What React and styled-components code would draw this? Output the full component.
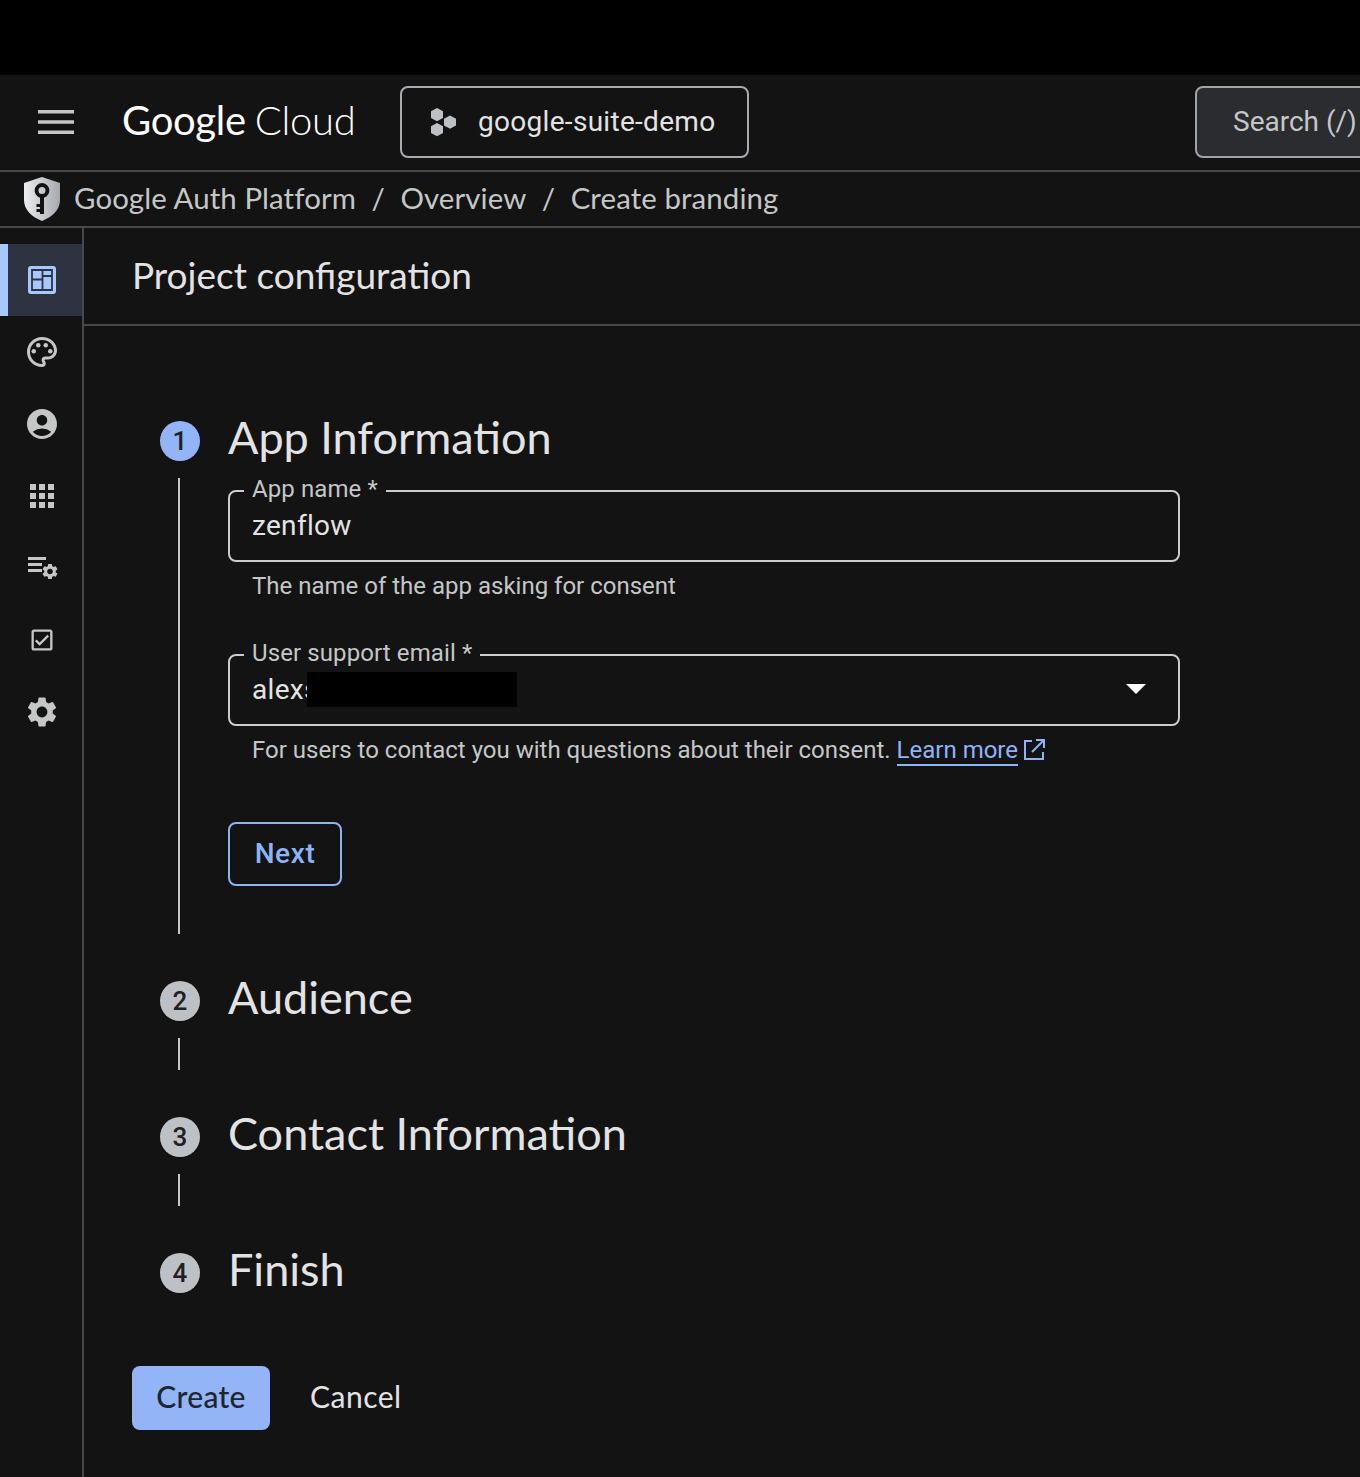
import React from 'react';
import styled, { createGlobalStyle } from 'styled-components';
import { MdOutlinePalette, MdAccountCircle, MdApps, MdSettings, MdOutlineCheckBox, MdArrowDropDown } from 'react-icons/md';

const GlobalStyle = createGlobalStyle`
  html, body { margin: 0; padding: 0; background: #131314; }
  body { font-family: Roboto, "Liberation Sans", sans-serif; color: #e3e3e3; }
  * { box-sizing: border-box; }
`;

const DISPLAY = 'Lato, "Open Sans", sans-serif';

const Page = styled.div`
  width: 1360px;
  height: 1477px;
  overflow: hidden;
  display: flex;
  flex-direction: column;
  background: #131314;
`;

const BlackStrip = styled.div`
  height: 75px;
  background: #000;
  flex: none;
`;

const TopBar = styled.header`
  height: 97px;
  flex: none;
  display: flex;
  align-items: center;
  padding: 0 0 2px 38px;
  border-bottom: 2px solid #47484a;
  white-space: nowrap;
`;

const Burger = styled.svg`
  width: 36px;
  height: 24px;
  flex: none;
`;

const Logo = styled.div`
  margin-left: 48px;
  padding-bottom: 4px;
  width: 278px;
  flex: none;
  font-family: ${DISPLAY};
  font-size: 40px;
  letter-spacing: -0.3px;
  color: #fff;
  display: flex;
  gap: 9px;
`;

const LogoLight = styled.span`
  font-weight: 300;
`;

const ProjectButton = styled.div`
  width: 349px;
  height: 72px;
  flex: none;
  display: flex;
  align-items: center;
  gap: 20px;
  padding-left: 28px;
  border: 2px solid #a8abb0;
  border-radius: 8px;
  font-size: 28px;
  letter-spacing: 0.3px;
  color: #e3e3e3;
`;

const SearchBox = styled.div`
  margin-left: 446px;
  width: 240px;
  height: 72px;
  flex: none;
  display: flex;
  align-items: center;
  padding-left: 36px;
  background: #2a2c2f;
  border: 2px solid #a0a3a8;
  border-radius: 8px;
  font-size: 28px;
  color: #c4c7c5;
`;

const Crumbs = styled.nav`
  height: 56px;
  flex: none;
  display: flex;
  align-items: center;
  padding: 0 0 4px 22px;
  border-bottom: 2px solid #47484a;
  font-family: ${DISPLAY};
  font-size: 29.4px;
  letter-spacing: 0.1px;
  color: #c4c7c5;
  white-space: nowrap;
`;

const CrumbIcon = styled.svg`
  width: 40px;
  height: 44px;
  margin: 4px 12px 0 0;
  flex: none;
`;

const Slash = styled.span`
  margin: 0 15.5px;
`;

const Body = styled.div`
  flex: 1;
  display: flex;
  min-height: 0;
`;

const Rail = styled.aside`
  width: 84px;
  flex: none;
  padding-top: 16px;
  border-right: 2px solid #47484a;
`;

const RailItem = styled.div`
  height: 72px;
  display: flex;
  align-items: center;
  justify-content: center;
  color: ${(p) => (p.$active ? '#a8c7fa' : '#c4c7c5')};
  background: ${(p) => (p.$active ? '#2d3340' : 'transparent')};
  border-left: 8px solid ${(p) => (p.$active ? '#a8c7fa' : 'transparent')};
  padding-right: 6px;
  font-size: 36px;
`;

const Main = styled.main`
  flex: 1;
  min-width: 0;
`;

const TitleBar = styled.div`
  height: 98px;
  display: flex;
  align-items: center;
  padding: 0 0 4px 48px;
  border-bottom: 2px solid #47484a;
`;

const Title = styled.h1`
  margin: 0;
  font-family: ${DISPLAY};
  font-weight: 400;
  font-size: 37px;
  color: #e3e3e3;
`;

const Content = styled.div`
  padding: 85px 0 0 76px;
`;

const StepHead = styled.div`
  display: flex;
  align-items: center;
  height: 56px;
`;

const StepNumber = styled.div`
  width: 40px;
  height: 40px;
  border-radius: 50%;
  flex: none;
  margin-top: 4px;
  display: flex;
  align-items: center;
  justify-content: center;
  font-size: 26px;
  font-weight: 500;
  color: #1f2023;
  background: ${(p) => (p.$active ? '#93b4f7' : '#bdc1c6')};
`;

const StepTitle = styled.h2`
  margin: 0 0 4px 28px;
  font-family: ${DISPLAY};
  font-weight: 400;
  font-size: 45px;
  color: #e3e3e3;
`;

const StepBody = styled.div`
  display: flow-root;
  margin-left: 18px;
  margin-top: 11px;
  padding-left: 48px;
  height: ${(p) => p.$height}px;
  border-left: 2px solid #c4c7c5;
`;

const Step = styled.section`
  margin-bottom: ${(p) => p.$gap}px;
`;

const FieldBox = styled.fieldset`
  margin: -1px 0 0;
  padding: 0 22px;
  width: 952px;
  height: 85px;
  border: 2px solid #c9cccf;
  border-radius: 8px;
  display: flex;
  align-items: center;
  justify-content: space-between;
  font-size: 28px;
  letter-spacing: 0.3px;
  color: #e3e3e3;
`;

const Legend = styled.legend`
  padding: 0 8px 4px;
  margin-left: -8px;
  line-height: 24px;
  font-size: 24px;
  letter-spacing: 0.1px;
  color: #c4c7c5;
`;

const ValueRow = styled.div`
  display: flex;
  align-items: center;
  margin-top: -15px;
`;

const Redaction = styled.span`
  width: 210px;
  height: 35px;
  margin-left: -12px;
  background: #000;
`;

const Caret = styled.span`
  display: flex;
  margin-right: -4px;
  margin-top: -17px;
  font-size: 48px;
  color: #fff;
`;

const Hint = styled.p`
  margin: 10px 0 0 24px;
  height: 28px;
  font-size: 24px;
  line-height: 28px;
  color: #c4c7c5;
  display: flex;
  align-items: flex-start;
`;

const HelpLink = styled.a`
  margin-left: 6px;
  color: #8fb3f7;
  border-bottom: 2px solid #8fb3f7;
  line-height: 28px;
`;

const LinkIcon = styled.svg`
  width: 22px;
  height: 22px;
  margin: 3px 0 0 5px;
  flex: none;
`;

const SecondField = styled.div`
  margin-top: 42px;
`;

const NextButton = styled.button`
  display: block;
  margin-top: 58px;
  width: 114px;
  height: 64px;
  padding: 0 0 2px;
  background: transparent;
  border: 2px solid #8fb3f7;
  border-radius: 8px;
  font-family: Roboto, sans-serif;
  font-size: 28px;
  font-weight: 500;
  letter-spacing: 0.6px;
  color: #8fb3f7;
`;

const Actions = styled.div`
  display: flex;
  align-items: center;
  margin: 67px 0 0 -28px;
  gap: 40px;
`;

const CreateButton = styled.button`
  width: 138px;
  height: 64px;
  padding: 0 0 5px;
  background: #93b4f7;
  border: 0;
  border-radius: 8px;
  font-family: ${DISPLAY};
  font-size: 30px;
  letter-spacing: 0.3px;
  font-weight: 500;
  color: #202530;
`;

const CancelLink = styled.span`
  margin-bottom: 5px;
  font-family: ${DISPLAY};
  font-size: 30px;
  letter-spacing: 0.5px;
  color: #e3e3e3;
`;

const DashboardIcon = () => (
  <svg width="28" height="28" viewBox="0 0 28 28">
    <rect width="28" height="28" rx="3" fill="currentColor" />
    <path fill="none" stroke="#2d3340" strokeWidth="1.800" d="M4 4h20v20H4zM14.500 4v20M4 13.500h10.500M14.500 10H24" />
  </svg>
);

const ListGearIcon = () => (
  <svg width="32" height="26" viewBox="0 0 32 26">
    <path fill="currentColor" d="M2 2h18v3H2zM2 8h14v3H2zM2 14h14v3H2z" />
    <MdSettings x="14.500" y="7" size="19" />
  </svg>
);

const HexIcon = () => (
  <svg width="28" height="30" viewBox="0 0 28 30">
    <path fill="#bdc1c6" d="M7 1l6 3.200v6.800L7 14.200 1 11V4.200zM7 16l6 3.200V26l-6 3.200L1 26v-6.800zM20 8.500l6 3.200v6.800l-6 3.200-6-3.200v-6.800z" />
  </svg>
);

const App = () => (
  <Page>
    <GlobalStyle />
    <BlackStrip />
    <TopBar>
      <Burger viewBox="0 0 36 24">
        <path fill="#c4c7c5" d="M0 0h36v3.500H0zM0 10.200h36v3.500H0zM0 20.500h36V24H0z" />
      </Burger>
      <Logo>
        <span>Google</span>
        <LogoLight>Cloud</LogoLight>
      </Logo>
      <ProjectButton>
        <HexIcon />
        google-suite-demo
      </ProjectButton>
      <SearchBox>Search (/)</SearchBox>
    </TopBar>
    <Crumbs>
      <CrumbIcon viewBox="0 0 40 44">
        <defs>
          <linearGradient id="shield" x1="0" y1="0" x2="1" y2="0">
            <stop offset="0" stopColor="#eceef0" />
            <stop offset="1" stopColor="#a5a9ae" />
          </linearGradient>
        </defs>
        <path fill="url(#shield)" d="M20 0l18 6v17c0 10-8 17-18 21C10 40 2 33 2 23V6z" />
        <path fill="#131314" fillRule="evenodd" d="M20 6a7.500 7.500 0 0 1 2 14.700V37h-4v-2h-3.500v-3H18v-2h-3.500v-3H18v-6.300A7.500 7.500 0 0 1 20 6zm0 4a3.500 3.500 0 1 0 0 7 3.500 3.500 0 0 0 0-7z" />
      </CrumbIcon>
      Google Auth Platform
      <Slash>/</Slash>
      Overview
      <Slash>/</Slash>
      Create branding
    </Crumbs>
    <Body>
      <Rail>
        <RailItem $active><DashboardIcon /></RailItem>
        <RailItem><MdOutlinePalette /></RailItem>
        <RailItem><MdAccountCircle /></RailItem>
        <RailItem><MdApps /></RailItem>
        <RailItem><ListGearIcon /></RailItem>
        <RailItem><MdOutlineCheckBox size="28" /></RailItem>
        <RailItem><MdSettings /></RailItem>
      </Rail>
      <Main>
        <TitleBar>
          <Title>Project configuration</Title>
        </TitleBar>
        <Content>
          <Step $gap={37}>
            <StepHead>
              <StepNumber $active>1</StepNumber>
              <StepTitle>App Information</StepTitle>
            </StepHead>
            <StepBody $height={456}>
              <FieldBox>
                <Legend>App name *</Legend>
                <ValueRow>zenflow</ValueRow>
              </FieldBox>
              <Hint>The name of the app asking for consent</Hint>
              <SecondField>
                <FieldBox>
                  <Legend>User support email *</Legend>
                  <ValueRow>alexs<Redaction /></ValueRow>
                  <Caret><MdArrowDropDown /></Caret>
                </FieldBox>
              </SecondField>
              <Hint>
                For users to contact you with questions about their consent.
                <HelpLink>Learn more</HelpLink>
                <LinkIcon viewBox="0 0 22 22">
                  <path fill="none" stroke="#8fb3f7" strokeWidth="2" d="M9 2H2v18h18v-7M13 1h8v8M21 1L9 13" />
                </LinkIcon>
              </Hint>
              <NextButton>Next</NextButton>
            </StepBody>
          </Step>
          <Step $gap={37}>
            <StepHead>
              <StepNumber>2</StepNumber>
              <StepTitle>Audience</StepTitle>
            </StepHead>
            <StepBody $height={32} />
          </Step>
          <Step $gap={37}>
            <StepHead>
              <StepNumber>3</StepNumber>
              <StepTitle>Contact Information</StepTitle>
            </StepHead>
            <StepBody $height={32} />
          </Step>
          <Step $gap={0}>
            <StepHead>
              <StepNumber>4</StepNumber>
              <StepTitle>Finish</StepTitle>
            </StepHead>
          </Step>
          <Actions>
            <CreateButton>Create</CreateButton>
            <CancelLink>Cancel</CancelLink>
          </Actions>
        </Content>
      </Main>
    </Body>
  </Page>
);

export default App;
